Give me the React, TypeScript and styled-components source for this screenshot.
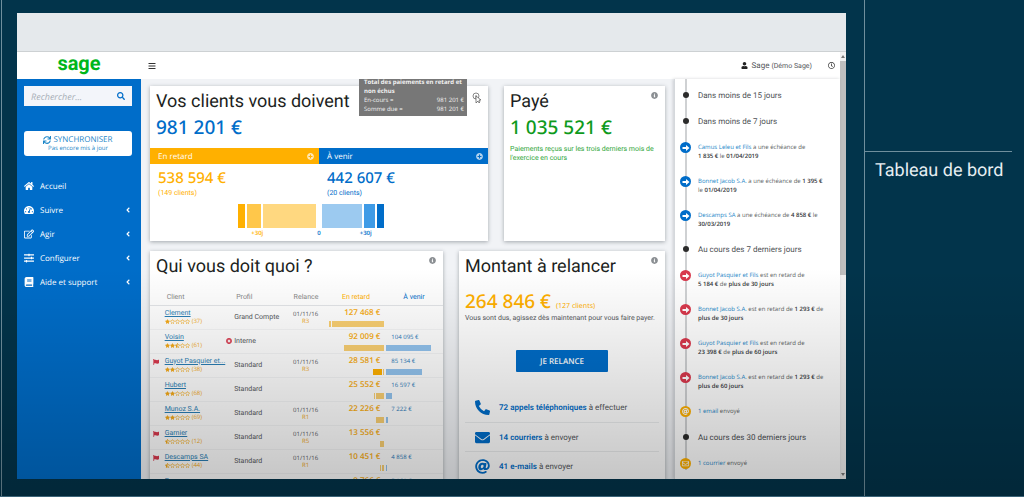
import React from "react";
import styled, { createGlobalStyle } from "styled-components";
import {
  FaAngleLeft,
  FaAt,
  FaBars,
  FaBook,
  FaEnvelope,
  FaFlag,
  FaHome,
  FaInfoCircle,
  FaPhoneAlt,
  FaPlusCircle,
  FaRegClock,
  FaRegEdit,
  FaRegStar,
  FaRegEnvelope,
  FaSearch,
  FaSlidersH,
  FaStar,
  FaStarHalfAlt,
  FaSync,
  FaTachometerAlt,
  FaTimesCircle,
  FaUser,
} from "react-icons/fa";

const c = {
  navy: "#02344b",
  line: "#6f8f9d",
  blue: "#006dc9",
  link: "#1c86c8",
  orange: "#ffb000",
  green: "#0e9a1c",
  red: "#d9394d",
  ink: "#1d1f22",
  text: "#55585c",
};

const compact = `Roboto, "Open Sans", sans-serif`;

const GlobalStyle = createGlobalStyle`
  *, *::before, *::after { box-sizing: border-box; }
  body { margin: 0; background: ${c.navy}; text-rendering: geometricPrecision; }
  body, button, input { font-family: "Open Sans", "Noto Sans", sans-serif; }
  button, input { text-rendering: inherit; }
  ul, h1, h2, p { margin: 0; padding: 0; font-weight: 400; }
  ul { list-style: none; }
  a { text-decoration: none; color: inherit; }
  svg { display: block; flex: none; }
  button { border: 0; padding: 0; background: none; color: inherit; cursor: pointer; }
`;

const Page = styled.div`
  position: relative;
  display: grid;
  grid-template-columns: minmax(0, 1fr) 160px;
  height: 100vh;
  overflow: hidden;
  background: ${c.navy};
  border-bottom: 1px solid #3c6478;
`;

const Shade = styled.div`
  position: absolute;
  inset: 54% 0 0 0;
  pointer-events: none;
  background: linear-gradient(rgba(0, 0, 0, 0), rgba(0, 0, 0, 0.07) 30%, rgba(0, 0, 0, 0.24));
`;

const Stage = styled.div`
  display: flex;
  min-height: 0;
  margin-left: 1px;
  padding: 13px 18px 17px 15px;
  border-left: 1px solid ${c.line};
`;

const Caption = styled.aside`
  border-left: 1px solid ${c.line};
  padding: 151px 12px 0 0;
`;

const CaptionTitle = styled.h2`
  border-top: 1px solid ${c.line};
  padding: 8px 0 0 10px;
  color: #e6eef2;
  font: 400 18px/22px Roboto, sans-serif;
  white-space: nowrap;
`;

const Screen = styled.div`
  flex: 1;
  min-width: 0;
  display: flex;
  flex-direction: column;
  overflow: hidden;
  background: #fff;
`;

const BrowserBar = styled.div`
  flex: none;
  height: 39px;
  background: #e5e9ec;
  border-bottom: 1px solid #cdd1d3;
`;

const Viewport = styled.div`
  flex: 1;
  min-height: 0;
  display: flex;
`;

const Shell = styled.div`
  flex: 1;
  min-width: 0;
  display: flex;
  flex-direction: column;
`;

const ScrollTrack = styled.div`
  flex: none;
  width: 6px;
  display: flex;
  flex-direction: column;
  align-items: center;
  background: #f1f1f1;
`;

const ScrollThumb = styled.div`
  width: 6px;
  flex: 0 1 50%;
  margin-bottom: auto;
  background: #bfbfbf;
`;

const ScrollArrow = styled.svg`
  width: 4px;
  height: 9px;
  fill: #777;
`;

const Header = styled.header`
  flex: none;
  height: 27px;
  display: flex;
  align-items: center;
  padding-right: 5px;
  color: #333;
`;

const Brand = styled.a`
  flex: none;
  width: 124px;
  text-align: center;
  color: #00b61b;
  font: 700 20px/20px Roboto, sans-serif;
  padding-bottom: 5px;
`;

const IconButton = styled.button<{ $size: number }>`
  display: flex;
  font-size: ${(p) => p.$size}px;
`;

const MenuSlot = styled.div`
  flex: 1;
  padding-left: 7px;
`;

const User = styled.div`
  display: flex;
  align-items: center;
  gap: 4px;
  margin-right: 16px;
  font-family: ${compact};
  font-size: 8px;
  line-height: 12px;
  color: ${c.text};
  svg { font-size: 7px; color: #222; }
  small { font-size: 7px; }
`;

const Columns = styled.div`
  flex: 1;
  min-height: 0;
  display: flex;
`;

const Sidebar = styled.nav`
  flex: none;
  width: 124px;
  padding: 7px 9px 0 7px;
  background: ${c.blue};
  color: #fff;
`;

const Search = styled.label`
  display: flex;
  align-items: center;
  height: 20px;
  padding: 0 7px;
  background: #f3f5fa;
  color: ${c.blue};
  font-size: 8px;
`;

const SearchInput = styled.input`
  flex: 1;
  min-width: 0;
  padding: 0;
  border: 0;
  outline: 0;
  background: none;
  font-size: 9px;
  font-style: italic;
  &::placeholder { color: #a9b0b8; opacity: 1; }
`;

const SyncButton = styled.button`
  display: flex;
  flex-direction: column;
  align-items: center;
  justify-content: center;
  width: 100%;
  height: 25px;
  margin-top: 25px;
  border-radius: 3px;
  background: #fff;
  color: ${c.link};
  font-size: 6px;
  line-height: 7px;
  strong {
    display: flex;
    align-items: center;
    gap: 2px;
    font-weight: 400;
    font-size: 8px;
    line-height: 10px;
  }
`;

const Menu = styled.ul`
  margin-top: 18px;
`;

const MenuLink = styled.a`
  display: grid;
  grid-template-columns: 16px 1fr auto;
  align-items: center;
  height: 24px;
  font-size: 8px;
  > svg:first-child { font-size: 10px; }
`;

const Main = styled.main`
  position: relative;
  flex: 1;
  min-width: 0;
  overflow: hidden;
  display: grid;
  grid-template-rows: auto 1fr;
  gap: 10px;
  padding: 7px 9px 0;
  background: #f1f3f6;
`;

const Row = styled.div<{ $cols: string }>`
  display: grid;
  grid-template-columns: ${(p) => p.$cols};
  gap: 16px;
  min-height: 0;
`;

const Card = styled.section`
  position: relative;
  min-width: 0;
  padding: 4px 0 3px;
  background: #fff;
  box-shadow: 0 1px 4px rgba(40, 50, 60, 0.4);
`;

const CardHead = styled.header`
  display: flex;
  justify-content: space-between;
  align-items: flex-start;
  padding: 0 7px 0 6px;
`;

const CardTitle = styled.h2`
  color: ${c.ink};
  font: 400 18px/24px Roboto, sans-serif;
  white-space: nowrap;
`;

const InfoButton = styled(IconButton)`
  color: #8b8f93;
  margin-top: 2px;
`;

const Total = styled.p<{ $color: string; $gap?: number }>`
  margin-top: ${(p) => p.$gap ?? 0}px;
  padding: 0 6px;
  color: ${(p) => p.$color};
  font-family: "Noto Sans", sans-serif;
  font-size: 19px;
  font-weight: 500;
  line-height: 26px;
  white-space: nowrap;
  small { font-size: 7px; font-weight: 400; line-height: 7px; margin-left: 5px; }
`;

const Note = styled.p<{ $color: string; $gap?: number }>`
  margin-top: ${(p) => p.$gap ?? 0}px;
  padding: 0 6px;
  color: ${(p) => p.$color};
  font-family: ${compact};
  font-size: 7px;
  line-height: 9px;
`;

const Halves = styled.div`
  display: grid;
  grid-template-columns: 1fr 1fr;
`;

const HalfTab = styled.div<{ $color: string }>`
  display: flex;
  align-items: center;
  justify-content: space-between;
  height: 16px;
  margin-top: 8px;
  padding: 0 5px 0 8px;
  background: ${(p) => p.$color};
  color: #fff;
  font-size: 8px;
  button { opacity: 0.7; }
`;

const HalfAmount = styled.div<{ $color: string }>`
  padding: 4px 8px 0;
  color: ${(p) => p.$color};
  font-family: ${compact};
  font-size: 7px;
  line-height: 9px;
  strong {
    display: block;
    font: 500 15px/21px "Noto Sans", sans-serif;
  }
`;

const Bars = styled.div<{ $end?: boolean }>`
  display: flex;
  gap: 2px;
  height: 24px;
  margin-top: 6px;
  padding: 0 3px;
  justify-content: ${(p) => (p.$end ? "flex-end" : "flex-start")};
`;

const Bar = styled.span<{ $w: number; $color: string }>`
  width: ${(p) => p.$w}px;
  background: ${(p) => p.$color};
`;

const Scale = styled.div`
  display: grid;
  grid-template-columns: 1fr auto 1fr;
  margin-top: 1px;
  color: ${c.blue};
  font-size: 6px;
  font-weight: 600;
  line-height: 9px;
  span:first-child { padding-right: 54px; text-align: right; color: ${c.orange}; }
  span:last-child { padding-left: 39px; }
`;

const Tooltip = styled.div`
  position: absolute;
  top: -9px;
  right: 21px;
  width: 108px;
  padding: 1px 3px 2px 5px;
  background: #777;
  color: #f2f2f2;
  font-size: 6px;
  line-height: 9px;
  strong { display: block; }
  div { display: flex; justify-content: space-between; }
`;

const Pointer = styled.svg`
  width: 9px;
  height: 12px;
`;

const ClientTable = styled.table`
  width: 100%;
  margin-top: 12px;
  table-layout: fixed;
  border-collapse: collapse;
  font-size: 6px;
  line-height: 9px;
  color: ${c.text};
  th, td { padding: 0; text-align: left; font-weight: 400; white-space: nowrap; }
  th { height: 14px; font-family: ${compact}; font-size: 7px; border-bottom: 1px solid #e3e5e8; color: #888; }
  td { height: 24px; border-bottom: 1px solid #f4f5f6; }
`;

const Th = styled.th<{ $pad?: number; $color?: string }>`
  && { padding-left: ${(p) => p.$pad ?? 0}px; ${(p) => p.$color && `color: ${p.$color};`} }
`;

const FlagCell = styled.td`
  vertical-align: top;
  svg { margin: 5px 0 0 3px; font-size: 6px; color: ${c.red}; }
`;

const ClientLink = styled.a`
  display: block;
  color: #2a7fb5;
  font-family: ${compact};
  font-size: 7px;
  text-decoration: underline;
`;

const Stars = styled.div`
  display: flex;
  align-items: center;
  height: 8px;
  color: #f5ab1c;
  svg { font-size: 5px; }
  span { margin-left: 2px; }
`;

const Profile = styled.div`
  display: grid;
  grid-template-columns: 8px auto;
  align-items: center;
  font-family: ${compact};
  font-size: 7px;
  svg { font-size: 6px; color: ${c.red}; }
`;

const Reminder = styled.div`
  width: 30px;
  text-align: center;
  line-height: 8px;
  small { display: block; font-size: 6px; line-height: 7px; color: #f0a51c; }
`;

const Due = styled.div<{ $late?: boolean }>`
  display: flex;
  flex-direction: column;
  align-items: ${(p) => (p.$late ? "flex-end" : "flex-start")};
  padding-left: ${(p) => (p.$late ? 0 : 2)}px;
  color: ${(p) => (p.$late ? "#f8ac12" : "#2777b8")};
  b {
    height: 12px;
    line-height: 12px;
    font-size: ${(p) => (p.$late ? 8 : 6)}px;
    font-weight: ${(p) => (p.$late ? 600 : 400)};
    margin: ${(p) => (p.$late ? "0 4px 0 0" : "0 0 0 5px")};
  }
`;

const MiniBars = styled.div`
  display: flex;
  gap: 1px;
  height: 6px;
  margin-top: 2px;
`;

const ActionButton = styled.button`
  display: block;
  width: 92px;
  height: 22px;
  margin: 27px auto 21px;
  border-radius: 1px;
  background: ${c.blue};
  color: #fff;
  font-size: 8px;
  font-weight: 600;
`;

const Tasks = styled.ul`
  margin: 0 6px;
`;

const Task = styled.li`
  display: grid;
  grid-template-columns: 24px 1fr;
  align-items: center;
  height: 29px;
  padding-left: 10px;
  color: ${c.text};
  font-family: ${compact};
  font-size: 8px;
  & + & { border-top: 1px solid #ebedee; }
  svg { color: ${c.blue}; font-size: 15px; }
  a { color: ${c.blue}; font-weight: 600; }
`;

const Feed = styled.aside`
  flex: none;
  width: 166px;
  overflow: hidden;
  background: #fff;
  border-left: 1px solid #d5d8dc;
  box-shadow: -1px 0 3px rgba(40, 50, 60, 0.2);
  position: relative;
`;

const FeedList = styled.ul`
  margin-left: 10px;
  padding: 12px 0 0 11px;
  border-left: 2px solid #cfd1d3;
`;

const FeedItem = styled.li<{ $heading?: boolean }>`
  position: relative;
  min-height: 26px;
  padding-bottom: 16px;
  color: ${(p) => (p.$heading ? "#4d5054" : "#5c5f63")};
  font-family: ${(p) => (p.$heading ? compact : "inherit")};
  font-size: ${(p) => (p.$heading ? 8 : 6)}px;
  line-height: 9px;
  white-space: nowrap;
  &:last-child { min-height: 0; padding-bottom: 2px; }
  a { color: ${c.link}; }
  b { color: #34373a; font-weight: 600; }
`;

const Badge = styled.span<{ $color: string }>`
  position: absolute;
  top: -1px;
  left: -18px;
  width: 11px;
  height: 11px;
  display: grid;
  place-items: center;
  border-radius: 50%;
  background: ${(p) => p.$color};
  color: #fff;
  font-size: 7px;
`;

const Dot = styled(Badge)`
  top: 1px;
  left: -15px;
  width: 6px;
  height: 6px;
`;

type Seg = [number, string];
type Client = {
  name: string;
  flag?: boolean;
  stars: number;
  count: number;
  profile: string;
  blocked?: boolean;
  step?: string;
  late: string;
  lateBars: Seg[];
  next?: string;
  nextBars?: Seg[];
};

const Y1 = "#ffb000";
const Y2 = "#f9cf72";
const B1 = "#92c3ee";

const clients: Client[] = [
  { name: "Clement", stars: 1, count: 37, profile: "Grand Compte", step: "R3", late: "127 468 €", lateBars: [[2, Y2], [52, Y2]] },
  { name: "Voisin", stars: 2.5, count: 61, profile: "Interne", blocked: true, late: "92 009 €", lateBars: [[40, Y2]], next: "104 095 €", nextBars: [[45, B1]] },
  { name: "Guyot Pasquier et...", flag: true, stars: 2, count: 38, profile: "Standard", step: "R3", late: "28 581 €", lateBars: [[9, Y1], [1, Y2]], next: "85 134 €", nextBars: [[36, B1]] },
  { name: "Hubert", stars: 2, count: 68, profile: "Standard", late: "25 552 €", lateBars: [[1, Y2], [8, Y2]], next: "16 597 €", nextBars: [[6, B1]] },
  { name: "Munoz S.A.", stars: 2, count: 69, profile: "Standard", step: "R1", late: "22 226 €", lateBars: [[8, Y2]], next: "7 222 €", nextBars: [[2, B1]] },
  { name: "Garnier", flag: true, stars: 0.5, count: 12, profile: "Standard", step: "R5", late: "13 556 €", lateBars: [[4, Y2]] },
  { name: "Descamps SA", flag: true, stars: 0.5, count: 44, profile: "Standard", step: "R1", late: "10 451 €", lateBars: [[1, Y2], [2, Y2]], next: "4 858 €", nextBars: [[1, B1]] },
  { name: "Rosan", stars: 1, count: 20, profile: "Standard", step: "R1", late: "9 766 €", lateBars: [[4, Y2]], next: "5 060 €", nextBars: [[2, B1]] },
];

const menu = [
  { label: "Accueil", icon: <FaHome /> },
  { label: "Suivre", icon: <FaTachometerAlt />, more: true },
  { label: "Agir", icon: <FaRegEdit />, more: true },
  { label: "Configurer", icon: <FaSlidersH />, more: true },
  { label: "Aide et support", icon: <FaBook />, more: true },
];

function Rating({ value, count }: { value: number; count: number }) {
  return (
    <Stars>
      {[1, 2, 3, 4, 5].map((n) =>
        value >= n ? <FaStar key={n} /> : value >= n - 0.5 ? <FaStarHalfAlt key={n} /> : <FaRegStar key={n} />
      )}
      <span>({count})</span>
    </Stars>
  );
}

function Segments({ items }: { items: Seg[] }) {
  return (
    <MiniBars>
      {items.map(([w, color], i) => (
        <Bar key={i} $w={w} $color={color} />
      ))}
    </MiniBars>
  );
}

function Info() {
  return (
    <InfoButton $size={7} aria-label="Informations">
      <FaInfoCircle />
    </InfoButton>
  );
}

function ArrowGlyph() {
  return (
    <svg width="8" height="8" viewBox="0 0 8 8" fill="currentColor">
      <path d="M.5 3H4V1l3.5 3L4 7V5H.5z" />
    </svg>
  );
}

function Heading({ children }: { children: React.ReactNode }) {
  return (
    <FeedItem $heading>
      <Dot $color="#2b2b2b" />
      {children}
    </FeedItem>
  );
}

function Event({ color, icon, children }: { color: string; icon?: React.ReactNode; children: React.ReactNode }) {
  return (
    <FeedItem>
      <Badge $color={color}>{icon ?? <ArrowGlyph />}</Badge>
      {children}
    </FeedItem>
  );
}

export default function App() {
  return (
    <Page>
      <GlobalStyle />
      <Stage>
        <Screen>
          <BrowserBar />
          <Viewport>
            <Shell>
              <Header>
                <Brand href="#">sage</Brand>
                <MenuSlot>
                  <IconButton $size={8} aria-label="Menu">
                    <FaBars />
                  </IconButton>
                </MenuSlot>
                <User>
                  <FaUser />
                  <span>
                    Sage <small>(Démo Sage)</small>
                  </span>
                </User>
                <IconButton $size={7} aria-label="Historique">
                  <FaRegClock />
                </IconButton>
              </Header>
              <Columns>
                <Sidebar>
                  <Search>
                    <SearchInput type="text" placeholder="Rechercher..." aria-label="Rechercher" />
                    <FaSearch />
                  </Search>
                  <SyncButton>
                    <strong>
                      <FaSync /> SYNCHRONISER
                    </strong>
                    Pas encore mis à jour
                  </SyncButton>
                  <Menu>
                    {menu.map((m) => (
                      <li key={m.label}>
                        <MenuLink href="#">
                          {m.icon}
                          <span>{m.label}</span>
                          {m.more && <FaAngleLeft />}
                        </MenuLink>
                      </li>
                    ))}
                  </Menu>
                </Sidebar>
                <Main>
                  <Row $cols="338fr 161fr">
                    <Card>
                      <CardHead>
                        <CardTitle>Vos clients vous doivent</CardTitle>
                        <InfoButton $size={7} aria-label="Détail du total">
                          <Pointer viewBox="0 0 9 12">
                            <circle cx="4" cy="4" r="3" fill="none" stroke="#888" />
                            <path d="M4 3v4" stroke="#888" />
                            <path d="M4 4v7l2-2 1 2 1-1-1-2h2z" fill="#fff" stroke="#555" strokeWidth=".7" />
                          </Pointer>
                        </InfoButton>
                      </CardHead>
                      <Total $color={c.blue}>981 201 €</Total>
                      <Halves>
                        <HalfTab $color={c.orange}>
                          En retard
                          <IconButton $size={7} aria-label="Détail en retard">
                            <FaPlusCircle />
                          </IconButton>
                        </HalfTab>
                        <HalfTab $color={c.blue}>
                          À venir
                          <IconButton $size={7} aria-label="Détail à venir">
                            <FaPlusCircle />
                          </IconButton>
                        </HalfTab>
                        <HalfAmount $color={c.orange}>
                          <strong>538 594 €</strong>(149 clients)
                        </HalfAmount>
                        <HalfAmount $color={c.blue}>
                          <strong>442 607 €</strong>(20 clients)
                        </HalfAmount>
                        <Bars $end>
                          <Bar $w={7} $color="#ffb000" />
                          <Bar $w={14} $color="#ffc74a" />
                          <Bar $w={53} $color="#ffd880" />
                        </Bars>
                        <Bars>
                          <Bar $w={40} $color="#9ccaf0" />
                          <Bar $w={11} $color="#3f9be6" />
                          <Bar $w={7} $color={c.blue} />
                        </Bars>
                      </Halves>
                      <Scale>
                        <span>+30j</span>
                        <span>0</span>
                        <span>+30j</span>
                      </Scale>
                      <Tooltip role="tooltip">
                        <strong>Total des paiements en retard et non échus</strong>
                        <div>
                          <span>En-cours =</span>
                          <span>981 201 €</span>
                        </div>
                        <div>
                          <span>Somme due =</span>
                          <span>981 201 €</span>
                        </div>
                      </Tooltip>
                    </Card>
                    <Card>
                      <CardHead>
                        <CardTitle>Payé</CardTitle>
                        <Info />
                      </CardHead>
                      <Total $color={c.green}>1 035 521 €</Total>
                      <Note $color="#2fa63a" $gap={5}>
                        Paiements reçus sur les trois derniers mois de l'exercice en cours
                      </Note>
                    </Card>
                  </Row>
                  <Row $cols="293fr 206fr">
                    <Card>
                      <CardHead>
                        <CardTitle>Qui vous doit quoi ?</CardTitle>
                        <Info />
                      </CardHead>
                      <ClientTable>
                        <colgroup>
                          <col style={{ width: "5%" }} />
                          <col style={{ width: "21%" }} />
                          <col style={{ width: "22%" }} />
                          <col style={{ width: "10%" }} />
                          <col style={{ width: "22%" }} />
                          <col style={{ width: "20%" }} />
                        </colgroup>
                        <thead>
                          <tr>
                            <Th aria-label="Alerte" />
                            <Th $pad={2}>Client</Th>
                            <Th $pad={10}>Profil</Th>
                            <Th $pad={3}>Relance</Th>
                            <Th $pad={22} $color={c.orange}>En retard</Th>
                            <Th $pad={19} $color={c.blue}>À venir</Th>
                          </tr>
                        </thead>
                        <tbody>
                          {clients.map((r) => (
                            <tr key={r.name}>
                              <FlagCell>{r.flag && <FaFlag />}</FlagCell>
                              <td>
                                <ClientLink href="#">{r.name}</ClientLink>
                                <Rating value={r.stars} count={r.count} />
                              </td>
                              <td>
                                <Profile>
                                  {r.blocked ? <FaTimesCircle /> : <i />}
                                  {r.profile}
                                </Profile>
                              </td>
                              <td>
                                {r.step && (
                                  <Reminder>
                                    01/11/16<small>{r.step}</small>
                                  </Reminder>
                                )}
                              </td>
                              <td>
                                <Due $late>
                                  <b>{r.late}</b>
                                  <Segments items={r.lateBars} />
                                </Due>
                              </td>
                              <td>
                                {r.next && (
                                  <Due>
                                    <b>{r.next}</b>
                                    <Segments items={r.nextBars ?? []} />
                                  </Due>
                                )}
                              </td>
                            </tr>
                          ))}
                        </tbody>
                      </ClientTable>
                    </Card>
                    <Card>
                      <CardHead>
                        <CardTitle>Montant à relancer</CardTitle>
                        <Info />
                      </CardHead>
                      <Total $color={c.orange} $gap={9}>
                        264 846 €<small>(127 clients)</small>
                      </Total>
                      <Note $color={c.text}>Vous sont dus, agissez dès maintenant pour vous faire payer.</Note>
                      <ActionButton>JE RELANCE</ActionButton>
                      <Tasks>
                        <Task>
                          <FaPhoneAlt />
                          <span>
                            <a href="#">72 appels téléphoniques</a> à effectuer
                          </span>
                        </Task>
                        <Task>
                          <FaEnvelope />
                          <span>
                            <a href="#">14 courriers</a> à envoyer
                          </span>
                        </Task>
                        <Task>
                          <FaAt />
                          <span>
                            <a href="#">41 e-mails</a> à envoyer
                          </span>
                        </Task>
                      </Tasks>
                    </Card>
                  </Row>
                </Main>
                <Feed>
                  <FeedList>
                    <Heading>Dans moins de 15 jours</Heading>
                    <Heading>Dans moins de 7 jours</Heading>
                    <Event color={c.blue}>
                      <a href="#">Camus Leleu et Fils</a> a une échéance de
                      <br />
                      <b>1 835 €</b> le <b>01/04/2019</b>
                    </Event>
                    <Event color={c.blue}>
                      <a href="#">Bonnet Jacob S.A.</a> a une échéance de <b>1 395 €</b>
                      <br />
                      le <b>01/04/2019</b>
                    </Event>
                    <Event color={c.blue}>
                      <a href="#">Descamps SA</a> a une échéance de <b>4 858 €</b> le
                      <br />
                      <b>30/03/2019</b>
                    </Event>
                    <Heading>Au cours des 7 derniers jours</Heading>
                    <Event color={c.red}>
                      <a href="#">Guyot Pasquier et Fils</a> est en retard de
                      <br />
                      <b>5 184 €</b> de <b>plus de 30 jours</b>
                    </Event>
                    <Event color={c.red}>
                      <a href="#">Bonnet Jacob S.A.</a> est en retard de <b>1 293 €</b> de
                      <br />
                      <b>plus de 30 jours</b>
                    </Event>
                    <Event color={c.red}>
                      <a href="#">Guyot Pasquier et Fils</a> est en retard de
                      <br />
                      <b>23 398 €</b> de <b>plus de 60 jours</b>
                    </Event>
                    <Event color={c.red}>
                      <a href="#">Bonnet Jacob S.A.</a> est en retard de <b>1 293 €</b> de
                      <br />
                      <b>plus de 60 jours</b>
                    </Event>
                    <Event color={Y1} icon={<FaAt />}>
                      <a href="#">1 email</a> envoyé
                    </Event>
                    <Heading>Au cours des 30 derniers jours</Heading>
                    <Event color={Y1} icon={<FaRegEnvelope />}>
                      <a href="#">1 courrier</a> envoyé
                    </Event>
                  </FeedList>
                </Feed>
              </Columns>
            </Shell>
            <ScrollTrack>
              <ScrollArrow viewBox="0 0 4 9">
                <path d="M0 6l2-3 2 3z" />
              </ScrollArrow>
              <ScrollThumb />
              <ScrollArrow viewBox="0 0 4 9">
                <path d="M0 3l2 3 2-3z" />
              </ScrollArrow>
            </ScrollTrack>
          </Viewport>
        </Screen>
      </Stage>
      <Caption>
        <CaptionTitle>Tableau de bord</CaptionTitle>
      </Caption>
      <Shade />
    </Page>
  );
}
